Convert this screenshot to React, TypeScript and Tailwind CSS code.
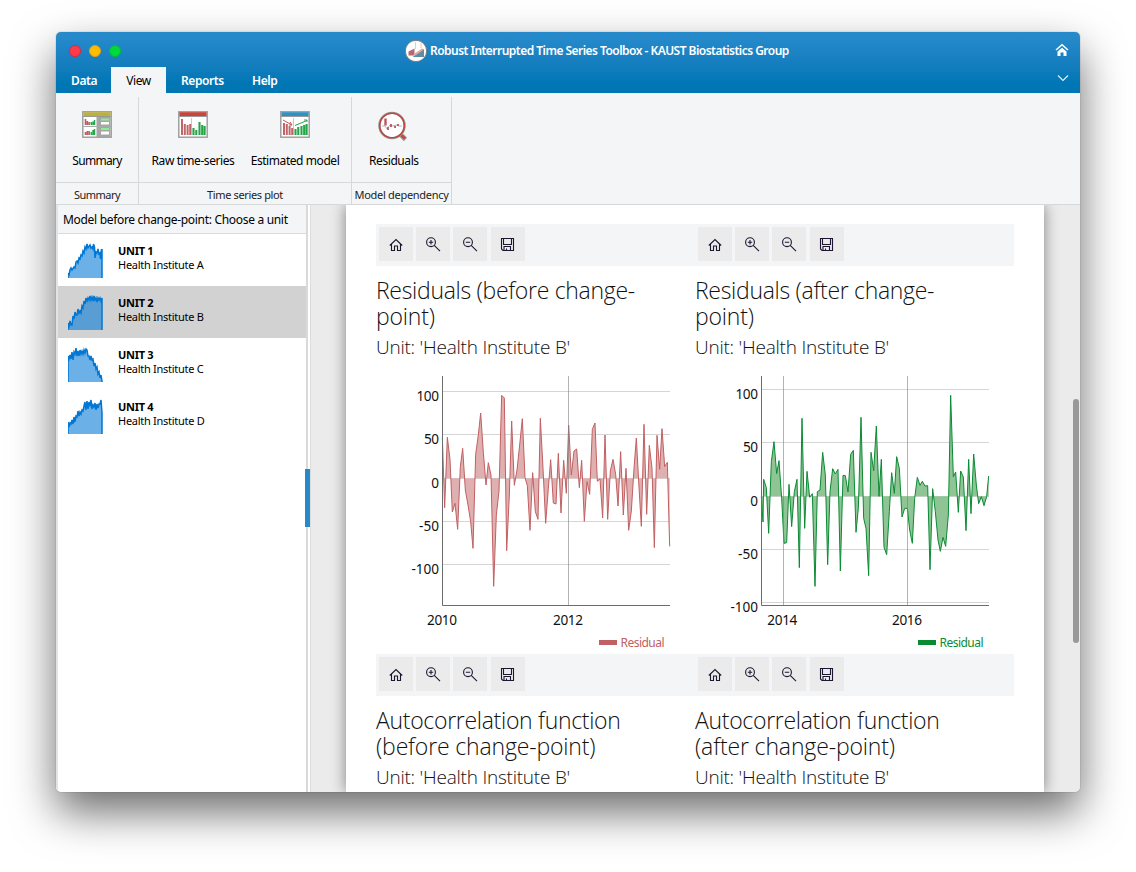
import React from 'react';

const RED: [number, number][] = [[199,215],[206,428],[214,217],[222,283],[229,441],[237,415],[245,493],[253,305],[260,250],[268,375],[276,420],[284,470],[291,550],[299,268],[307,210],[314,144],[322,262],[330,360],[337,293],[345,330],[353,664],[361,450],[369,378],[377,91],[385,99],[392,557],[400,390],[407,168],[415,361],[423,315],[431,240],[439,161],[447,338],[454,362],[462,496],[470,323],[478,440],[486,463],[493,160],[501,310],[509,475],[517,370],[524,284],[532,414],[540,417],[547,265],[555,444],[563,286],[571,385],[578,181],[586,330],[594,258],[602,252],[610,368],[617,286],[625,469],[633,350],[641,388],[649,193],[657,174],[664,349],[672,342],[680,459],[687,210],[695,463],[703,318],[711,283],[719,328],[726,423],[734,260],[742,450],[750,310],[758,496],[766,438],[774,310],[781,219],[788,350],[796,484],[804,178],[812,448],[820,241],[828,310],[835,548],[843,211],[851,313],[858,191],[866,305],[874,292],[881,544]];
const GREEN: [number, number][] = [[214,395],[219,471],[221,343],[229,368],[236,505],[244,290],[252,230],[260,326],[267,287],[275,400],[282,535],[290,533],[297,358],[305,485],[313,380],[321,343],[328,608],[336,160],[344,490],[351,319],[359,397],[367,386],[375,664],[382,380],[390,375],[398,262],[406,330],[413,599],[420,380],[428,311],[436,327],[444,313],[451,618],[459,331],[466,332],[474,381],[482,268],[490,256],[498,502],[505,430],[513,157],[521,460],[528,490],[536,632],[543,262],[551,317],[559,183],[567,394],[574,283],[582,547],[590,569],[598,440],[605,323],[613,385],[620,275],[628,310],[636,456],[644,430],[652,430],[659,495],[667,535],[674,400],[682,337],[690,361],[697,349],[705,363],[713,362],[720,614],[728,371],[736,440],[744,525],[751,559],[759,517],[767,544],[775,450],[782,91],[790,335],[797,321],[805,442],[812,318],[820,336],[828,497],[836,283],[843,446],[851,267],[859,360],[866,416],[874,395],[882,422],[890,395],[896,333]];

type ChartProps = {
  pts: [number, number][]; color: string; fill: string; zero: number; x0: number;
  rows: [number, string][]; cols: [number, string][]; grid: number[]; shift: number;
};

function Chart({ pts, color, fill, zero, x0, rows, cols, grid, shift }: ChartProps) {
  const sx = (x: number) => (x - shift) / 3;
  const line = pts.map(([x, y]) => `${sx(x).toFixed(2)},${(y / 3).toFixed(2)}`).join(' ');
  const z = zero / 3;
  const left = Math.floor(sx(x0)) + 0.5;
  return (
    <svg width="319" height="289" viewBox="0 0 319 289" className="block font-['Noto_Sans',sans-serif]">
      {rows.map(([y]) => <line key={y} x1={left} x2="294" y1={Math.floor(y / 3) + 0.5} y2={Math.floor(y / 3) + 0.5} stroke="#d5d5d5" />)}
      <polygon points={`${sx(pts[0][0])},${z} ${line} ${sx(pts[pts.length - 1][0])},${z}`} fill={fill} />
      <polyline points={line} fill="none" stroke={color} strokeWidth="1" />
      {grid.map((x) => <line key={x} x1={Math.floor(sx(x)) + 0.5} x2={Math.floor(sx(x)) + 0.5} y1="11" y2="240" stroke="#808080" strokeOpacity=".6" />)}
      <path d={`M${left} 11V240.5H294`} fill="none" stroke="#6c6c6c" />
      {rows.map(([y, t]) => <text key={t} x="63" y={y / 3 + 9.5} textAnchor="end" fontSize="13.6" fill="#111" textLength={t.length * 7.5 - (t[0] === '-' ? 2.5 : 0)}>{t}</text>)}
      {cols.map(([x, t]) => <text key={t} x={sx(x)} y="260" textAnchor="middle" fontSize="13.6" fill="#111" textLength="30">{t}</text>)}
      <rect x="223" y="275" width="18" height="5" fill={color} />
      <text x="244.500" y="282" fontSize="12" fill={color} textLength="44">Residual</text>
    </svg>
  );
}

const TBtn = ({ children, cls = '' }: { children: React.ReactNode; cls?: string }) => (
  <div className={`flex h-[34px] w-[34px] items-center justify-center bg-[#ebebeb] ${cls}`}>
    <svg width="16" height="16" viewBox="0 0 16 16" fill="none" stroke="#1c1630" strokeWidth="1.1">{children}</svg>
  </div>
);

function Toolbar() {
  return (
    <div className="flex h-[42px] gap-[3px] bg-[#f4f5f7] py-[3px] pl-[3px]">
      <TBtn><path d="M1.800 9.500 8 3.500l6.200 6M3.500 8v6.500h3V10h3v4.500h3V8" /></TBtn>
      <TBtn><circle cx="6" cy="6.200" r="4.400" /><path d="M9.200 9.400 15 15.200M3.800 6.200h4.400M6 4v4.400" /></TBtn>
      <TBtn><circle cx="6" cy="6.200" r="4.400" /><path d="M9.200 9.400 15 15.200M3.800 6.200h4.400" /></TBtn>
      <TBtn cls="ml-px"><path d="M1.500 2.500h12v12H3L1.500 13zM3.500 2.500v6h8v-6M4 14.500v-4h6.500v4M6.500 14.500v-2" /></TBtn>
    </div>
  );
}

function Heading({ a, b, wb }: { a: string; b: string; wb: string }) {
  return (
    <div className="h-[99px] pt-[11px] font-['Open_Sans',sans-serif] font-light text-[#111]">
      <p className="text-[23px] leading-[26px] whitespace-nowrap tracking-[-0.3px]">
        {a}
        <br />
        <span className={wb}>{b}</span>
      </p>
      <p className="mt-[4px] whitespace-nowrap text-[19px] leading-[28px] tracking-[-0.23px]">Unit: 'Health Institute B'</p>
    </div>
  );
}

const UNITS = [
  ['UNIT 1', 'Health Institute A', 'M0 35V31L1 32 2 27 3 25 4 27 6 24 7 25 8 19 9 18 10 20 11 15 12 16 13 12 14 13 15 8 16 10 17 4 18 6 19 1 20 5 22 2 23 5 24 4 25 6 25.500 1 26.500 4 27 15 28 9 29 10 30 6 31 11 32 10 32.500 16 33.500 6 34 12 34 6V35'],
  ['UNIT 2', 'Health Institute B', 'M0 35V28L1 31 2 26 3 30 4 30 5 21 6 24 7 17 8 20 9 20 10 14 11 18 12 16 13 18 14 11 15 13 16 6 17 9 18 3 19 6 20 3 21 5 22 1 23 5 24 2 25 6 26 1 27 5 28 3 29 7 30 3 31 5 32 3 33 6 34 3V35'],
  ['UNIT 3', 'Health Institute C', 'M0 35V9L1 12 2 8 3 12 4 5 5 13 6 5 7 7 8 1 9 9 10 4 11 9 12 3 13 7 14 4 15 7 16 3 17 6 18 2 19 3 20 9 21 9 22 13 23 9 24 13 25 12 26 19 27 16 28 22 29 20 30 27 31 25 32 31 33 28 34 34V35'],
  ['UNIT 4', 'Health Institute D', 'M0 35V23L1 28 2 24 3 25 4 21 5 25 6 18 7 23 8 17 9 18 10 12 11 17 12 13 13 15 14 11 15 12 16 7 17 3 18 11 19 2 20 10 21 3 22 6 23 1 24 10 25 6 26 8 27 4 28 11 29 5 30 9 31 5 32 5 33 1 34 14V35'],
];

const Frame = ({ top, children }: { top: string; children: React.ReactNode }) => (
  <svg width="30" height="27" viewBox="0 0 30 27" className="-mt-px block">
    <rect x=".8" y=".8" width="28.400" height="25.400" fill="#fff" stroke="#999" strokeWidth="1.400" />
    <rect x="1.400" y="1.200" width="27.200" height="3.800" fill={top} />
    <path d="M1 5.500h28" stroke="#999" />
    {children}
  </svg>
);

const Label = ({ children, cls }: { children: string; cls: string }) => (
  <div className={`whitespace-nowrap text-[12px] leading-[16px] text-black ${cls}`}>{children}</div>
);

export default function App() {
  return (
    <div className="h-[872px] w-[1136px] overflow-hidden bg-white px-[56px] pt-[32px] font-['Noto_Sans',sans-serif]">
      <div className="flex h-[760px] w-[1024px] flex-col overflow-hidden rounded-[5px] bg-[#f4f5f7] shadow-[0_0_1px_rgba(0,0,0,0.6),0_20px_44px_rgba(0,0,0,0.58)]">
        <header className="flex h-[61px] shrink-0 flex-col bg-linear-to-b from-[#2589ca] from-10% to-[#0076b5] to-85% text-white">
          <div className="flex h-[35px] items-center pt-[2px]">
            <div className="flex w-[348px] gap-[8px] pl-[13px]">
              <i className="h-[12px] w-[12px] rounded-full border border-[#e0263c] bg-[#ff3b4b]" />
              <i className="h-[12px] w-[12px] rounded-full border border-[#e0a01a] bg-[#ffbd00]" />
              <i className="h-[12px] w-[12px] rounded-full border border-[#09b93c] bg-[#00d83c]" />
            </div>
            <svg width="24" height="24" viewBox="0 0 24 24">
              <circle cx="12" cy="12" r="10.700" fill="#fff" stroke="#777" />
              <path d="M11.500 3v7M17 4v5" stroke="#f2c6c0" />
              <path d="m4.500 12.500 6-3v7h-6z" fill="#b06a70" /><path d="m8.500 18 11.500-8v8z" fill="#5d8ea8" /><path d="m10 16 9-6" stroke="#e6a59d" strokeWidth="2" fill="none" />
            </svg>
            <div className="ml-[2px] w-[625px] whitespace-nowrap text-[12px] font-semibold tracking-[-0.53px]">Robust Interrupted Time Series Toolbox - KAUST Biostatistics Group</div>
            <svg width="14" height="14" viewBox="0 0 14 14" className="-mt-[2px] mr-[10px] shrink-0" fill="none">
              <path d="M1 7 7 1.800 13 7" stroke="#fff" strokeWidth="1.500" /><path d="M2.500 8.500 7 4.800l4.500 3.700V13H8.500V9.500h-3V13h-3z" fill="#fff" />
            </svg>
          </div>
          <div className="flex h-[26px] text-[12px] leading-[27px] font-semibold tracking-[-0.4px]">
            <div className="w-[55px] pl-[15px]">Data</div>
            <div className="w-[55px] bg-[#f4f5f7] text-center font-normal text-black">View</div>
            <div className="w-[71px] pl-[15px]">Reports</div>
            <div className="flex-1 pl-[15px]">Help</div>
            <svg width="12" height="8" viewBox="0 0 12 8" className="mt-[7px] mr-[11px]" fill="none" stroke="#e8f3fa" strokeWidth="1.100"><path d="m1 1.500 5 5 5-5" /></svg>
          </div>
        </header>

        <div className="flex h-[112px] shrink-0 border-b border-[#d6d8da] pt-[4px]">
          <div className="flex w-[83px] flex-col border-r border-[#d6d8da]">
            <div className="flex h-[86px] flex-col items-center border-b border-[#d6d8da] pt-[15px]">
              <Frame top="#bdb13d">
                <path d="M14.500 6h14v20h-14z" fill="#a6a6a6" /><path d="M1 15.500h28" stroke="#aaa" />
                <path d="M19 7.500h8v2h-8zM19 17h8v2h-8z" fill="#8af08a" /><path d="M19 11h8v2.500h-8zM19 20.500h8v3h-8z" fill="#fff" />
                <path d="M3.500 14V8M5.300 14v-4M7.100 14v-3M3.500 24v-3M5.300 24v-4M7.100 24v-4" stroke="#bd5b60" strokeWidth="1.600" />
                <path d="M9.300 14v-3M11 14v-3.500M12.500 14V9M9.300 24v-3M11 24v-5M12.500 24v-6" stroke="#27a94a" strokeWidth="1.500" />
              </Frame>
              <Label cls="mt-[15px] tracking-[-0.7px]">Summary</Label>
            </div>
            <div className="pt-[4px] text-center text-[11px] leading-[16px] tracking-[-0.5px] text-[#222]">Summary</div>
          </div>
          <div className="flex w-[213px] flex-col border-r border-[#d6d8da]">
            <div className="flex h-[86px] border-b border-[#d6d8da] pt-[15px]">
              <div className="flex w-[108px] flex-col items-center">
                <Frame top="#c9443b">
                  <path d="M13.500 7v17" stroke="#b8cde0" />
                  <path d="M4 24V8M6.800 24V13M9.600 24V14M12.200 24V13" stroke="#c0666a" strokeWidth="2" />
                  <path d="M15.500 24v-7M18.300 24v-5M21.500 24V11M24.200 24V14M26.600 24v-9" stroke="#24a548" strokeWidth="2.100" />
                </Frame>
                <Label cls="mt-[15px] tracking-[-0.42px]">Raw time-series</Label>
              </div>
              <div className="flex w-[96px] flex-col items-center">
                <Frame top="#2e93c2">
                  <path d="M13.500 7v17" stroke="#b8cde0" />
                  <path d="M4 24V12M6.800 24V13M9.600 24V15M12.200 24V17" stroke="#c0666a" strokeWidth="2" />
                  <path d="M15.500 24v-6M18.300 24v-8M21.500 24V15M24.200 24V14M26.600 24V13" stroke="#24a548" strokeWidth="2.100" />
                  <path d="m3 9 9 5m-2-3 2 3h-3" stroke="#c9554f" fill="none" /><path d="m15 14.500 12-5m-3-.5h3v2" stroke="#24a548" fill="none" />
                </Frame>
                <Label cls="mt-[15px] tracking-[-0.43px]">Estimated model</Label>
              </div>
            </div>
            <div className="pt-[4px] text-center text-[11px] leading-[16px] tracking-[-0.36px] text-[#222]">Time series plot</div>
          </div>
          <div className="flex w-[100px] flex-col border-r border-[#d6d8da]">
            <div className="flex h-[86px] flex-col border-b border-[#d6d8da] pt-[13px]">
              <svg width="32" height="32" viewBox="0 0 32 32" className="ml-[25px]" fill="none">
                <path d="m23 24 5.500 5.500" stroke="#999" strokeWidth="4.600" /><path d="m23 24 5 4.500" stroke="#c2453e" strokeWidth="2.400" />
                <circle cx="15" cy="15.500" r="12.600" fill="#fff" stroke="#999" strokeWidth="2.400" /><circle cx="15" cy="15.500" r="12.300" stroke="#c2453e" strokeWidth="1.500" />
                <path d="M5 16h3l2 3 3-4 3 1 3-1 3 1h3" stroke="#aeb4c4" /><path d="M8.500 8.500v7" stroke="#bd555d" strokeWidth="2.400" /><path d="M11 17v3M14 14v3M18 16v2M21 14v2" stroke="#bd555d" strokeWidth="1.800" />
              </svg>
              <Label cls="mt-[11px] pl-[17px] tracking-[-0.42px]">Residuals</Label>
            </div>
            <div className="pt-[4px] text-center text-[11px] leading-[16px] tracking-[-0.3px] whitespace-nowrap text-[#222]">Model dependency</div>
          </div>
        </div>

        <main className="flex h-[587px] overflow-hidden">
          <aside className="w-[252px] shrink-0 border-r-[2px] border-l-[2px] border-r-[#d9dadb] border-l-[#e2e3e4] bg-white">
            <div className="h-[29px] border-b border-[#d9dadb] bg-[#f4f5f7] pl-[5px] text-[12px] leading-[30px] tracking-[-0.31px] whitespace-nowrap text-black">Model before change-point: Choose a unit</div>
            {UNITS.map(([name, inst, d], i) => (
              <div key={name} className={`flex h-[52px] pt-[9px] pl-[10px] ${i === 1 ? 'bg-[#d2d2d2]' : ''}`}>
                <svg width="35" height="35" viewBox="0 0 35 35"><path d={d} fill="#0077d4" fillOpacity=".58" stroke="#0077d4" strokeWidth="1.500" /></svg>
                <div className="ml-[15px] text-[11px] leading-[14px] text-black">
                  <div className="pt-px font-bold tracking-[-0.3px]">{name}</div>
                  <div className="whitespace-nowrap tracking-[-0.27px]">{inst}</div>
                </div>
              </div>
            ))}
          </aside>
          <div className="relative w-[3px] shrink-0 border-r border-[#dcdcdc] bg-white">
            <div className="absolute top-[264px] -left-[3px] h-[58px] w-[5px] bg-[#2589ca]" />
          </div>
          <div className="flex min-w-0 flex-1 overflow-hidden bg-[#ebebeb] pl-[35px]">
            <div className="h-[587px] w-[698px] shrink-0 bg-white px-[30px] pt-[19px] shadow-[0_0_14px_rgba(0,0,0,0.45)]">
              <div className="grid w-[638px] grid-cols-2">
                <div>
                  <Toolbar />
                  <Heading a="Residuals (before change-" b="point)" wb="tracking-[-0.2px]" />
                  <Chart pts={RED} color="#c06062" fill="#e0b0b1" zero={340} x0={199} shift={0} rows={[[79, '100'], [209, '50'], [339, '0'], [470, '-50'], [599, '-100']]} cols={[[198, '2010'], [576, '2012']]} grid={[577]} />
                  <Toolbar />
                  <Heading a="Autocorrelation function" b="(before change-point)" wb="tracking-[-0.16px]" />
                </div>
                <div>
                  <Toolbar />
                  <Heading a="Residuals (after change-" b="point)" wb="tracking-[-0.2px]" />
                  <Chart pts={GREEN} color="#0b8a34" fill="#8fc494" zero={394} x0={214} shift={15} rows={[[73, '100'], [232, '50'], [394, '0'], [553, '-50'], [713, '-100']]} cols={[[277, '2014'], [651, '2016']]} grid={[280, 652]} />
                  <Toolbar />
                  <Heading a="Autocorrelation function" b="(after change-point)" wb="tracking-[-0.14px]" />
                </div>
              </div>
            </div>
            <div className="ml-auto pt-[194px] pr-px"><div className="h-[244px] w-[6px] rounded-full bg-[#999]" /></div>
          </div>
        </main>
      </div>
    </div>
  );
}
